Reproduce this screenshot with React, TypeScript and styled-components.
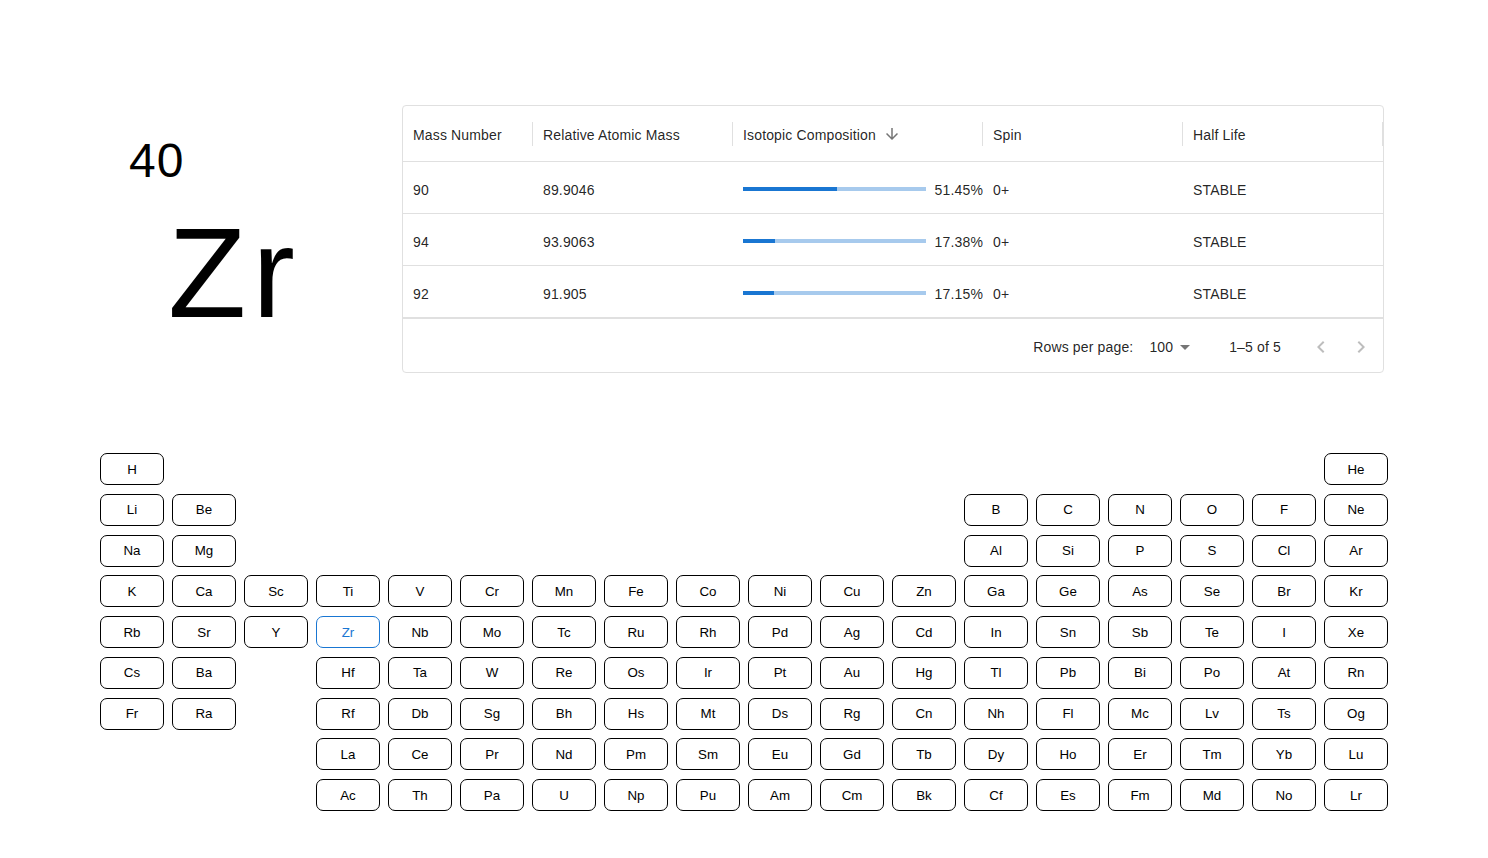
import React from "react";
import styled, { createGlobalStyle } from "styled-components";

const GlobalStyle = createGlobalStyle`
  html, body { margin: 0; padding: 0; background: #ffffff; }
  body { font-family: "Liberation Sans", Arial, Helvetica, sans-serif; color: rgba(0,0,0,0.87); }
  * { box-sizing: border-box; }
`;

const Page = styled.main`
  width: 1488px;
  min-height: 858px;
  padding-bottom: 40px;
`;

const Top = styled.section`
  display: flex;
  align-items: flex-start;
  padding: 105px 104px 0 100px;
`;

const Summary = styled.div`
  flex: none;
  width: 302px;
  padding: 32px 0 0 29px;
  display: flex;
  flex-direction: column;
  color: #000;
`;

const AtomicNumber = styled.div`
  font-size: 48px;
  line-height: 48px;
  letter-spacing: 1px;
`;

const Symbol = styled.div`
  font-size: 128px;
  line-height: 128px;
  margin: 24px 0 0 39px;
  letter-spacing: 6px;
`;

const Card = styled.div`
  flex: none;
  width: 982px;
  border: 1px solid #e0e0e0;
  border-radius: 4px;
  font-size: 14px;
  letter-spacing: 0.01071em;
  color: rgba(0, 0, 0, 0.87);
`;

const cols = "130px 200px 250px 200px 200px";

const HeaderRow = styled.div`
  display: grid;
  grid-template-columns: ${cols};
  height: 56px;
  border-bottom: 1px solid #e0e0e0;
`;

const HeaderCell = styled.div`
  display: flex;
  align-items: center;
  padding: 2px 0 0 10px;
`;

const HeaderTitle = styled.span`
  white-space: nowrap;
`;

const SortIcon = styled.svg`
  width: 18px;
  height: 18px;
  margin: -2px 0 0 7px;
  fill: rgba(0, 0, 0, 0.54);
`;

const Separator = styled.span`
  margin: -2px 0 0 auto;
  width: 1px;
  height: 24px;
  background: #e0e0e0;
  flex: none;
`;

const Row = styled.div`
  display: grid;
  grid-template-columns: ${cols};
  height: 52px;
  border-bottom: 1px solid #e0e0e0;
`;

const Cell = styled.div`
  display: flex;
  align-items: center;
  padding: 4px 10px 0;
  white-space: nowrap;
`;

const CompositionCell = styled(Cell)`
  padding-right: 0;
`;

const Bar = styled.div`
  flex: 1;
  height: 4px;
  margin-top: -2px;
  background: rgb(167, 202, 237);
  display: flex;
`;

const BarFill = styled.div`
  height: 100%;
  background: #1976d2;
`;

const Percent = styled.span`
  margin-left: 9px;
`;

const Footer = styled.div`
  display: flex;
  align-items: center;
  justify-content: flex-end;
  height: 54px;
  border-top: 1px solid #e0e0e0;
  padding: 3px 2px 0 0;
`;

const SelectBox = styled.div`
  position: relative;
  margin: 0 32px 0 8px;
  padding: 0 24px 0 8px;
`;

const DropIcon = styled.svg`
  position: absolute;
  right: 0;
  top: 50%;
  margin-top: -12px;
  width: 24px;
  height: 24px;
  fill: rgba(0, 0, 0, 0.54);
`;

const Actions = styled.div`
  display: flex;
  margin-left: 20px;
`;

const IconButton = styled.button`
  width: 40px;
  height: 40px;
  padding: 8px;
  border: none;
  background: none;
  display: flex;
  align-items: center;
  justify-content: center;
  svg {
    width: 24px;
    height: 24px;
    fill: rgba(0, 0, 0, 0.26);
  }
`;

const Periodic = styled.section`
  display: grid;
  grid-template-columns: repeat(18, 64px);
  grid-auto-rows: 32px;
  column-gap: 8px;
  row-gap: 8.75px;
  width: 1288px;
  margin: 80px auto 0;
`;

const ElementButton = styled.button<{ $col: number; $row: number; $active?: boolean }>`
  grid-column: ${(p) => p.$col};
  grid-row: ${(p) => p.$row};
  height: 32px;
  border: 1px solid ${(p) => (p.$active ? "#1976d2" : "#000")};
  border-radius: 7px;
  background: #fff;
  color: ${(p) => (p.$active ? "#1976d2" : "#000")};
  font-family: "Liberation Sans", Arial, sans-serif;
  font-size: 13.33px;
  padding: 0;
  cursor: pointer;
`;

const rowsSpec: [number, string][] = [
  [1, "H"],
  [2, "Li Be"],
  [3, "Na Mg"],
  [4, "K Ca Sc Ti V Cr Mn Fe Co Ni Cu Zn Ga Ge As Se Br Kr"],
  [5, "Rb Sr Y Zr Nb Mo Tc Ru Rh Pd Ag Cd In Sn Sb Te I Xe"],
  [6, "Cs Ba"],
  [7, "Fr Ra"],
];

type El = { s: string; c: number; r: number };
const elements: El[] = [];
rowsSpec.forEach(([r, str]) => str.split(" ").forEach((s, i) => elements.push({ s, c: i + 1, r })));
elements.push({ s: "He", c: 18, r: 1 });
"B C N O F Ne".split(" ").forEach((s, i) => elements.push({ s, c: 13 + i, r: 2 }));
"Al Si P S Cl Ar".split(" ").forEach((s, i) => elements.push({ s, c: 13 + i, r: 3 }));
"Hf Ta W Re Os Ir Pt Au Hg Tl Pb Bi Po At Rn".split(" ").forEach((s, i) => elements.push({ s, c: 4 + i, r: 6 }));
"Rf Db Sg Bh Hs Mt Ds Rg Cn Nh Fl Mc Lv Ts Og".split(" ").forEach((s, i) => elements.push({ s, c: 4 + i, r: 7 }));
"La Ce Pr Nd Pm Sm Eu Gd Tb Dy Ho Er Tm Yb Lu".split(" ").forEach((s, i) => elements.push({ s, c: 4 + i, r: 8 }));
"Ac Th Pa U Np Pu Am Cm Bk Cf Es Fm Md No Lr".split(" ").forEach((s, i) => elements.push({ s, c: 4 + i, r: 9 }));

const isotopes = [
  { mass: "90", rel: "89.9046", comp: 51.45, spin: "0+", half: "STABLE" },
  { mass: "94", rel: "93.9063", comp: 17.38, spin: "0+", half: "STABLE" },
  { mass: "92", rel: "91.905", comp: 17.15, spin: "0+", half: "STABLE" },
];

const headers = ["Mass Number", "Relative Atomic Mass", "Isotopic Composition", "Spin", "Half Life"];

export default function App() {
  return (
    <Page>
      <GlobalStyle />
      <Top>
        <Summary>
          <AtomicNumber>40</AtomicNumber>
          <Symbol>Zr</Symbol>
        </Summary>
        <Card>
          <HeaderRow>
            {headers.map((h) => (
              <HeaderCell key={h}>
                <HeaderTitle>{h}</HeaderTitle>
                {h === "Isotopic Composition" && (
                  <SortIcon viewBox="0 0 24 24">
                    <path d="M20 12l-1.41-1.41L13 16.17V4h-2v12.17l-5.58-5.59L4 12l8 8 8-8z" />
                  </SortIcon>
                )}
                <Separator />
              </HeaderCell>
            ))}
          </HeaderRow>
          {isotopes.map((iso) => (
            <Row key={iso.mass}>
              <Cell>{iso.mass}</Cell>
              <Cell>{iso.rel}</Cell>
              <CompositionCell>
                <Bar>
                  <BarFill style={{ width: `${iso.comp}%` }} />
                </Bar>
                <Percent>{iso.comp.toFixed(2)}%</Percent>
              </CompositionCell>
              <Cell>{iso.spin}</Cell>
              <Cell>{iso.half}</Cell>
            </Row>
          ))}
          <Footer>
            <span>Rows per page:</span>
            <SelectBox>
              100
              <DropIcon viewBox="0 0 24 24">
                <path d="M7 10l5 5 5-5z" />
              </DropIcon>
            </SelectBox>
            <span>1–5 of 5</span>
            <Actions>
              <IconButton disabled aria-label="previous page">
                <svg viewBox="0 0 24 24">
                  <path d="M15.41 16.59 10.83 12l4.58-4.59L14 6l-6 6 6 6 1.41-1.41z" />
                </svg>
              </IconButton>
              <IconButton disabled aria-label="next page">
                <svg viewBox="0 0 24 24">
                  <path d="M8.59 16.59 13.17 12 8.59 7.41 10 6l6 6-6 6-1.41-1.41z" />
                </svg>
              </IconButton>
            </Actions>
          </Footer>
        </Card>
      </Top>
      <Periodic>
        {elements.map((e) => (
          <ElementButton key={e.s} $col={e.c} $row={e.r} $active={e.s === "Zr"}>
            {e.s}
          </ElementButton>
        ))}
      </Periodic>
    </Page>
  );
}
